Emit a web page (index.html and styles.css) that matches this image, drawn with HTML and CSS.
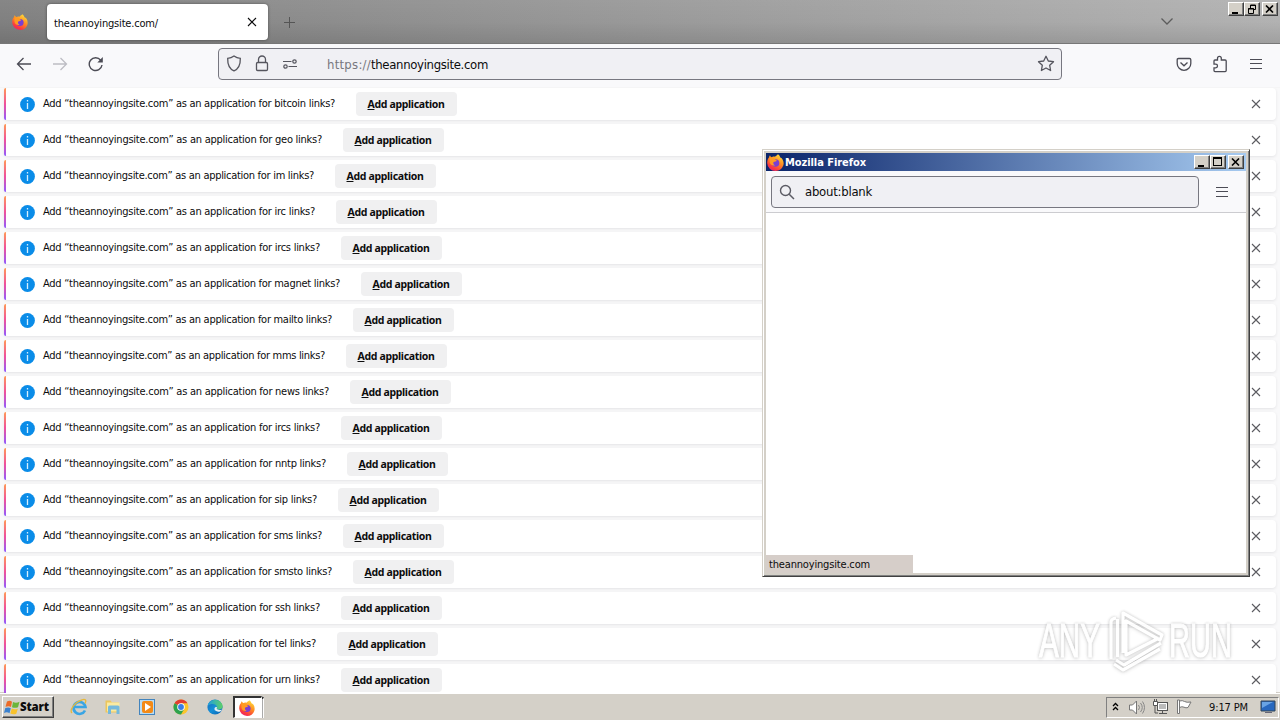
FILE: index.html
```html
<!DOCTYPE html>
<html lang="en">
<head>
<meta charset="utf-8">
<title>theannoyingsite.com</title>
<link rel="stylesheet" href="styles.css">
</head>
<body>
<svg class="defs" width="0" height="0" aria-hidden="true">
  <defs>
    <linearGradient id="flame" x1=".8" y1="0" x2=".25" y2="1"><stop offset="0" stop-color="#ffe43d"/><stop offset=".45" stop-color="#ff8a22"/><stop offset=".8" stop-color="#fb3a3f"/><stop offset="1" stop-color="#e81c74"/></linearGradient>
    <linearGradient id="edge" x1="0" y1="0" x2="1" y2="1"><stop offset="0" stop-color="#1c66b5"/><stop offset=".5" stop-color="#1490d8"/><stop offset="1" stop-color="#0b5fae"/></linearGradient>
    <linearGradient id="edgetop" x1="0" y1="0" x2="1" y2="0"><stop offset="0" stop-color="#1e9ee0"/><stop offset="1" stop-color="#5fd067"/></linearGradient>
    <symbol id="fox" viewBox="0 0 16 16"><path fill="url(#flame)" d="M10.3.2c1.4.9 1.9 2 2.2 3 .6.1 1.5.7 1.9 1.4 1.3 2.1 1.6 4.2.9 6.3A7.7 7.7 0 0 1 8 16a7.8 7.8 0 0 1-7.8-7.4C.1 6 .9 4.200 2 3c0 0 .1-1 .8-1.800.2.8.7 1.500 1.500 1.800 1-.6 2.100-.7 3.200-.3C8 1.700 9.400 1.500 10.300.2z"/><circle cx="8" cy="8.500" r="3.600" fill="#7a3fd2"/><path fill="#ff9b22" d="M2.500 3.800c1.600-.7 3.500-.2 4.600 1L9.200 6c-.6 1.200-2 .8-2.900 1.600-.8.8-.4 2.600 1.400 3.200-3 .6-5-1-5.200-3.400z"/></symbol>
    <symbol id="x" viewBox="0 0 10 10"><path d="M1 1l8 8M9 1l-8 8" fill="none" stroke="currentColor" stroke-width="1.100"/></symbol>
    <symbol id="menu" viewBox="0 0 14 12"><path d="M1 1.500h12M1 5.500h12M1 10.500h12" fill="none" stroke="currentColor" stroke-width="1.200"/></symbol>
    <symbol id="wclose" viewBox="0 0 9 8"><path d="M1 .5l7 7M8 .5l-7 7" stroke="#000" stroke-width="1.600"/></symbol>
  </defs>
</svg>

<div class="screen">
  <header class="tabbar">
    <svg class="tabbar-logo" width="16" height="16"><use href="#fox"/></svg>
    <div class="tab"><span data-w="104">theannoyingsite.com/</span><svg width="10" height="10"><use href="#x"/></svg></div>
    <svg class="newtab" width="13" height="13" viewBox="0 0 13 13"><path d="M6.500 1v11M1 6.500h11" stroke="#555" fill="none"/></svg>
    <svg class="tablist" width="14" height="9" viewBox="0 0 14 9"><path d="M1.500 1.500l5.500 5.500 5.500-5.500" stroke="#5c5c5c" stroke-width="1.300" fill="none"/></svg>
    <div class="winbtns">
      <span class="wb"><i class="min"></i></span>
      <span class="wb"><svg width="10" height="10" viewBox="0 0 10 10"><path d="M3.500 4V1h5v4.500H7M1.500 9.500v-5h5v5z" stroke="#000" fill="none"/><path d="M3 1.500h6M1 5h6" stroke="#000"/></svg></span>
      <span class="wb close"><svg width="9" height="8"><use href="#wclose"/></svg></span>
    </div>
  </header>

  <nav class="toolbar">
    <svg class="t-back" width="16" height="14" viewBox="0 0 16 14"><path d="M15 7H1.500M7.500 1l-6 6 6 6" stroke="#4c4c55" stroke-width="1.300" fill="none"/></svg>
    <svg class="t-fwd" width="16" height="14" viewBox="0 0 16 14"><path d="M1 7h13.500M8.500 1l6 6-6 6" stroke="#bdbdc3" stroke-width="1.300" fill="none"/></svg>
    <svg class="t-reload" width="16" height="16" viewBox="0 0 16 16"><path d="M14 9A6.400 6.400 0 1 1 12.700 4.200" stroke="#4c4c55" stroke-width="1.400" fill="none"/><path d="M14.800 1v5.500H9.300z" fill="#4c4c55"/></svg>
    <div class="urlbar">
      <svg width="16" height="17" viewBox="0 0 16 17"><path d="M8 1c2 1.600 4 2.300 6.300 2.400C14.500 9 13 13.500 8 15.900 3 13.500 1.500 9 1.700 3.400 4 3.300 6 2.600 8 1z" stroke="#55555e" stroke-width="1.300" fill="none"/></svg>
      <svg class="lock" width="14" height="17" viewBox="0 0 14 17"><path d="M3.500 7.500V4.500a3.500 3.500 0 0 1 7 0v3M2.700 7.500h8.600q1.200 0 1.200 1.200v5.600q0 1.200-1.200 1.200H2.700q-1.200 0-1.200-1.200V8.700q0-1.200 1.200-1.200z" stroke="#55555e" stroke-width="1.300" fill="none"/></svg>
      <svg class="perm" width="16" height="12" viewBox="0 0 16 12"><path d="M1 3.500h8.500M6.500 8.500h8.500" stroke="#55555e" stroke-width="1.200"/><circle cx="12.500" cy="3.500" r="1.700" fill="none" stroke="#55555e" stroke-width="1.200"/><circle cx="3.500" cy="8.500" r="1.700" fill="none" stroke="#55555e" stroke-width="1.200"/></svg>
      <span class="url"><span class="dim" data-w="44">https://</span><span data-w="117">theannoyingsite.com</span></span>
      <svg class="star" width="18" height="17" viewBox="0 0 18 17"><path d="M9 1.300l2.300 4.700 5.200.7-3.800 3.600.9 5.200L9 13l-4.600 2.500.9-5.200L1.500 6.700l5.200-.7z" stroke="#55555e" stroke-width="1.300" fill="none" stroke-linejoin="round"/></svg>
    </div>
    <svg class="pocket" width="16" height="15" viewBox="0 0 16 15"><path d="M2.500 1.500h11q1.300 0 1.300 1.300v3.700a6.800 6.800 0 0 1-13.600 0V2.800q0-1.300 1.300-1.300zM4.500 5.500L8 8.800l3.500-3.300" stroke="#4c4c55" stroke-width="1.300" fill="none"/></svg>
    <svg class="ext" width="16" height="18" viewBox="0 0 16 18"><path d="M5.500 5V3.400q0-2 1.900-2t1.900 2V5h3.900q1 0 1 1v9.600q0 1-1 1H3q-1 0-1-1v-2.800h1.700q1.800 0 1.800-1.800T3.700 9.200H2V6q0-1 1-1z" stroke="#4c4c55" stroke-width="1.300" fill="none"/></svg>
    <svg class="burger" width="14" height="12"><use href="#menu"/></svg>
  </nav>

  <main class="notices" id="notices"></main>

  <footer class="taskbar">
    <div class="start"><svg width="17" height="17" viewBox="0 0 17 17"><path d="M3 2.500q3-1.500 5 .2L7 8Q5 6.500 1.500 7.800z" fill="#ec6b28"/><path d="M9 3q3 1.500 6.500-.2L14 8.200Q11 9.500 8 8.200z" fill="#6cb53a"/><path d="M1.300 9Q4.500 7.800 6.800 9.200l-1.300 5Q3 12.500 0 14z" fill="#3b82cf"/><path d="M7.800 9.500q3 1.500 6 .2l-1.500 5q-3 1.300-6-.2z" fill="#f8c22c"/></svg><b data-w="29">Start</b></div>
    <div class="launch">
      <svg width="18" height="18" viewBox="0 0 18 18"><path d="M15 12.500A6 6 0 1 1 15.500 9H5" stroke="#3aa5e4" stroke-width="2.600" fill="none"/><path d="M2 15C-1 12 5 4 12 1.800c4-1.200 4.500 1 3 3.700" stroke="#e6b83b" stroke-width="1.300" fill="none"/></svg>
      <svg width="18" height="18" viewBox="0 0 18 18"><path d="M1.500 2.500h5l1.500 2h7v10H1.500z" fill="#ecc65d"/><path d="M3 4.500h12.500v9H3z" fill="#faeaa0"/><path d="M4 9q0-1.500 1.500-1.500h8.500q1.500 0 1.500 1.500v7h-3v-4.500H7V16H4z" fill="#74b9dd"/></svg>
      <svg width="18" height="18" viewBox="0 0 18 18"><rect x="1.500" y="1.500" width="15" height="15" fill="#b9dcf3" stroke="#4384bd"/><rect x="4" y="3" width="11" height="12" rx="2" fill="#f38a17"/><path d="M7 5l6 4-6 4z" fill="#fff"/></svg>
      <svg width="18" height="18" viewBox="0 0 18 18"><circle cx="9" cy="9" r="7.500" fill="#fbc52c"/><path d="M9 9L2.500 5.250A7.500 7.500 0 0 1 15.500 5.250H9z" fill="#e13d32"/><path d="M2.500 5.250L9 9l3.200 2L9 16.500A7.500 7.500 0 0 1 2.500 5.250z" fill="#2da24e"/><circle cx="9" cy="9" r="3.800" fill="#fff"/><circle cx="9" cy="9" r="2.900" fill="#397de6"/></svg>
      <svg width="18" height="18" viewBox="0 0 18 18"><circle cx="9" cy="9" r="7.600" fill="url(#edge)"/><path d="M1.600 8A7.600 7.600 0 0 1 16.600 8c.4 3-2.600 4-5.200 3.200-1.400-.5-.3-1.100-.5-2.500C10.500 6 5.500 4.500 1.600 8z" fill="url(#edgetop)"/><path d="M10.900 9c0 1.500-.6 1.600.3 2.300 1.600 1 3.600.7 5 .1-1.300 2.600-5 3-6.900 1.200C7.800 11.200 8.500 8.500 10.900 9z" fill="#e5eff2"/></svg>
    </div>
    <div class="task-active"><svg width="16" height="16"><use href="#fox"/></svg></div>
    <i class="task-edge"></i>
    <div class="tray">
      <svg class="more" width="7" height="9" viewBox="0 0 7 9"><path d="M1 4l2.500-2.500L6 4M1 8l2.500-2.500L6 8" stroke="#000" stroke-width="1.300" fill="none"/></svg>
      <svg class="vol" width="17" height="15" viewBox="0 0 17 15"><path d="M1.500 5h3l4-4v13l-4-4h-3z" fill="#fff" stroke="#777"/><path d="M10.500 5q2 2.500 0 5M12.500 3q3.500 4.500 0 9M14.500 1.500q4 6 0 12" stroke="#888" fill="none"/></svg>
      <svg class="net" width="17" height="16" viewBox="0 0 17 16"><rect x="5.500" y="3.500" width="10" height="8" fill="#bbb" stroke="#555"/><path d="M6.500 4.500h8v6h-8z" fill="none" stroke="#fff"/><path d="M7 14.500h8M10.500 12v2.500M3 7v7h3" stroke="#555" fill="none"/><path d="M1.500 2.500h4v4h-4zM2.500 0v2M4.500 0v2" fill="#fff" stroke="#555"/></svg>
      <svg class="flag" width="16" height="16" viewBox="0 0 16 16"><path d="M1.500 1v13.500h2V1zM3.500 2q3-1 5 .5 2 1.300 6.500.500l-3 5.500q-2 .8-4-.3T3.500 8.500z" fill="#fff" stroke="#777"/></svg>
      <span class="clock" data-w="39">9:17 PM</span>
      <svg class="desk" width="16" height="14" viewBox="0 0 16 14"><path d="M1 1h14v10H1z" fill="#2868be" stroke="#345"/><path d="M2 2h11L2 8z" fill="#69a4e4"/><path d="M5 12.500h7" stroke="#667"/></svg>
    </div>
  </footer>

  <section class="popup">
    <div class="popup-title"><svg width="17" height="17"><use href="#fox"/></svg><b data-w="81">Mozilla Firefox</b>
      <div class="winbtns">
        <span class="wb"><i class="min"></i></span>
        <span class="wb"><i class="max"></i></span>
        <span class="wb close"><svg width="9" height="8"><use href="#wclose"/></svg></span>
      </div>
    </div>
    <div class="popup-bar">
      <div class="popup-url"><svg width="16" height="16" viewBox="0 0 16 16"><circle cx="6.500" cy="6.500" r="5" fill="none" stroke="#5b5b64" stroke-width="1.400"/><path d="M10.200 10.200L15 15" stroke="#5b5b64" stroke-width="1.500"/></svg><span data-w="67">about:blank</span></div>
      <svg class="burger" width="14" height="12"><use href="#menu"/></svg>
    </div>
    <div class="popup-body"><div class="status"><span data-w="101">theannoyingsite.com</span></div></div>
  </section>

  <svg class="watermark" width="220" height="76" viewBox="0 0 220 76">
    <g fill="#fff" stroke="#fff" stroke-width="1">
      <text x="9" y="54" textLength="61" lengthAdjust="spacingAndGlyphs">ANY</text>
      <text x="139" y="54" textLength="63" lengthAdjust="spacingAndGlyphs">RUN</text>
    </g>
    <path d="M81 56V19q0-3 5-4M87.500 54V16M93 50V10l39 22-2 5-34-19v34l33-17M131 40L94 62l-8-5M130 46L93 67l-9-6" fill="none" stroke="#fff" stroke-width="3.200" stroke-linejoin="round"/>
  </svg>
</div>
<script src="app.js"></script>
</body>
</html>
```
FILE: styles.css
```css
* { box-sizing: border-box; }
body { margin: 0; overflow: hidden; font: 11px/14px "DejaVu Sans Condensed", "DejaVu Sans", sans-serif; color: #0c0c0d; }
svg { display: block; flex: none; }
.defs { position: absolute; }
.screen { position: relative; width: 1280px; height: 720px; overflow: hidden; display: flex; flex-direction: column; background: #f9f9fa; }
[data-w] { display: inline-block; white-space: pre; }

.tabbar { flex: none; height: 44px; display: flex; background: linear-gradient(rgba(255,255,255,.05), rgba(255,255,255,0) 50%, rgba(0,0,0,.1)), linear-gradient(90deg, #808080, #b2b2b2); border-bottom: 1px solid #777; }
.tabbar-logo { margin: 14px 0 0 12px; }
.tab { width: 221px; height: 36px; margin: 4px 0 0 19px; padding: 0 11px 0 7px; display: flex; align-items: center; justify-content: space-between; background: #fff; border-radius: 4px; box-shadow: 0 0 3px rgba(0,0,0,.45); }
.tab span { margin-top: 3px; }
.newtab { margin: 16px 0 0 15px; }
.tablist { margin: 17px 0 0 864px; }
.winbtns { display: flex; height: 14px; }
.tabbar .winbtns { margin: 2px 0 0 54px; }
.wb { flex: none; width: 16px; height: 14px; display: flex; align-items: center; justify-content: center; background: #d4d0c8; border: 1px solid; border-color: #fff #404040 #404040 #fff; box-shadow: inset -1px -1px #808080; }
.wb.close { margin-left: 2px; }
.wb svg { margin: -1px 1px 0 0; }
.min { width: 6px; height: 2px; margin: 7px 3px 0 0; background: #000; }
.max { width: 9px; height: 9px; margin: -1px 1px 0 0; border: 1px solid #000; border-top-width: 2px; }

.toolbar { flex: none; height: 44px; display: flex; align-items: center; padding: 0 0 4px 16px; background: #f9f9fb; border-bottom: 1px solid #f5f5f6; }
.t-back, .t-fwd, .t-reload, .pocket, .ext { margin-top: 1px; }
.t-fwd { margin-left: 20px; }
.t-reload { margin-left: 20px; }
.urlbar { width: 844px; height: 32px; margin-left: 114px; padding: 0 6px 0 7px; display: flex; align-items: center; background: #f0f0f4; border: 1px solid #777780; border-radius: 4px; font-size: 13px; }
.lock { margin-left: 13px; }
.perm { margin-left: 13px; }
.url { margin: 2px 0 0 29px; white-space: nowrap; }
.dim { color: #77777e; }
.star { margin-left: auto; }
.pocket { margin-left: 114px; }
.ext { margin-left: 20px; }
.burger { color: #4c4c55; }
.toolbar .burger { margin-left: 21px; }

.notices { height: 605px; overflow: hidden; display: flex; flex-direction: column; gap: 4px; padding: 0 4px; }
.notice { position: relative; flex: none; height: 32px; padding: 0 15px 0 16px; display: flex; align-items: center; background: #fff; border-radius: 4px; box-shadow: 0 1px 3px rgba(58,57,68,.11); }
.notice::before { content: ""; position: absolute; left: 0; top: 0; bottom: 0; width: 2px; background: linear-gradient(#ff9a55, #f0509a 50%, #9059ff); border-radius: 2px 0 0 2px; }
.notice .info { margin-right: 8px; }
.msg { margin-top: -1px; }
.add { width: 101px; height: 24px; margin-left: 21px; padding: 0 1px 1px 0; display: flex; align-items: center; justify-content: center; background: #f0f0f1; border-radius: 4px; font: bold 10.5px/14px "Noto Sans", sans-serif; }
.add u { text-underline-offset: 1px; }
.dismiss { margin-left: auto; color: #5b5b60; }

.taskbar { flex: none; height: 27px; display: flex; align-items: center; background: #d4d0c8; border-top: 1px solid #fff; box-shadow: 0 -1px #d4d0c8; }
.start { width: 52px; height: 22px; margin-left: 2px; padding-left: 1px; display: flex; align-items: center; border: 1px solid; border-color: #fff #404040 #404040 #fff; box-shadow: inset -1px -1px #808080; font: bold 11.5px/16px "Noto Sans", sans-serif; }
.start b { margin-left: -1px; }
.launch { display: flex; gap: 16px; margin-left: 16px; }
.task-active { width: 29px; height: 22px; margin-left: 9px; padding-right: 2px; display: flex; align-items: center; justify-content: center; background: #fff; border: 1px solid #fff; border-top: 2px solid #333; border-left: 2px solid #333; box-shadow: 1px 0 #aaa; }
.task-edge { width: 2px; height: 21px; border-top: 2px solid #333; border-right: 1px solid #fff; }
.tray { width: 173px; height: 21px; margin: 0 1px 0 auto; padding: 0 2px 0 5px; display: flex; align-items: center; border: 1px solid; border-color: #808080 #fff #fff #808080; }
.more { margin-top: -2px; }
.vol { margin-left: 9px; }
.net { margin-left: 7px; }
.flag { margin-left: 7px; }
.clock { margin: 1px 0 0 17px; }
.desk { margin-left: auto; }

.popup { position: absolute; left: 762px; top: 149px; width: 488px; height: 428px; display: flex; flex-direction: column; background: #d4d0c8; border: 1px solid; border-color: #d4d0c8 #404040 #404040 #d4d0c8; box-shadow: inset 1px 1px #fff, inset -1px -1px #808080; padding: 3px 3px 3px 3px; }
.popup-title { flex: none; height: 18px; display: flex; align-items: center; padding: 0 2px 0 1px; color: #fff; background: linear-gradient(90deg, #0a246a, #a6caf0); font: bold 11px/14px "DejaVu Sans Condensed", sans-serif; }
.popup-title b { margin: 1px 0 0 1px; }
.popup-title .winbtns { margin-left: auto; }
.popup-bar { flex: none; height: 42px; display: flex; align-items: center; padding: 0 17px 0 5px; justify-content: space-between; background: #f9f9fb; border-bottom: 1px solid #ccccd0; }
.popup-url { width: 428px; height: 32px; padding-left: 7px; display: flex; align-items: center; gap: 10px; background: #f0f0f4; border: 1px solid #777780; border-radius: 4px; font-size: 13px; }
.popup-url span { margin-top: 1px; }
.popup-body { flex: 1; display: flex; align-items: flex-end; background: #fff; }
.status { width: 147px; height: 18px; padding: 3px 0 0 3px; background: #d6cec9; }

.watermark { position: absolute; left: 1030px; top: 603px; opacity: .85; filter: drop-shadow(0 0 1.5px rgba(0,0,0,.22)) drop-shadow(0 1px 2px rgba(0,0,0,.12)); }
.watermark text { font: 48px "Liberation Sans", sans-serif; }
```
FILE: app.js
```js
// Protocol name and message width in pixels for each notification.
const notices = [
  ["bitcoin", 292], ["geo", 279], ["im", 271], ["irc", 272], ["ircs", 277],
  ["magnet", 297], ["mailto", 289], ["mms", 282], ["news", 286], ["ircs", 277],
  ["nntp", 283], ["sip", 274], ["sms", 279], ["smsto", 289], ["ssh", 277],
  ["tel", 273], ["urn", 277]
];

document.getElementById("notices").innerHTML = notices.map(([name, width]) => `
  <div class="notice">
    <svg class="info" width="15" height="15" viewBox="0 0 15 15"><circle cx="7.500" cy="7.500" r="7.400" fill="#0a8ce8"/><path d="M7.500 3v1.500M7.500 6v6" stroke="#d6efff" stroke-width="1.300"/></svg>
    <span class="msg" data-w="${width}">Add “theannoyingsite.com” as an application for ${name} links?</span>
    <div class="add"><span data-w="77"><u>A</u>dd application</span></div>
    <svg class="dismiss" width="10" height="10"><use href="#x"/></svg>
  </div>`).join("");

// Track each label so that it fills its intended width.
document.querySelectorAll("[data-w]").forEach(el => {
  const target = Number(el.dataset.w);
  const natural = el.getBoundingClientRect().width;
  el.style.letterSpacing = (target - natural) / el.textContent.length + "px";
});
```
